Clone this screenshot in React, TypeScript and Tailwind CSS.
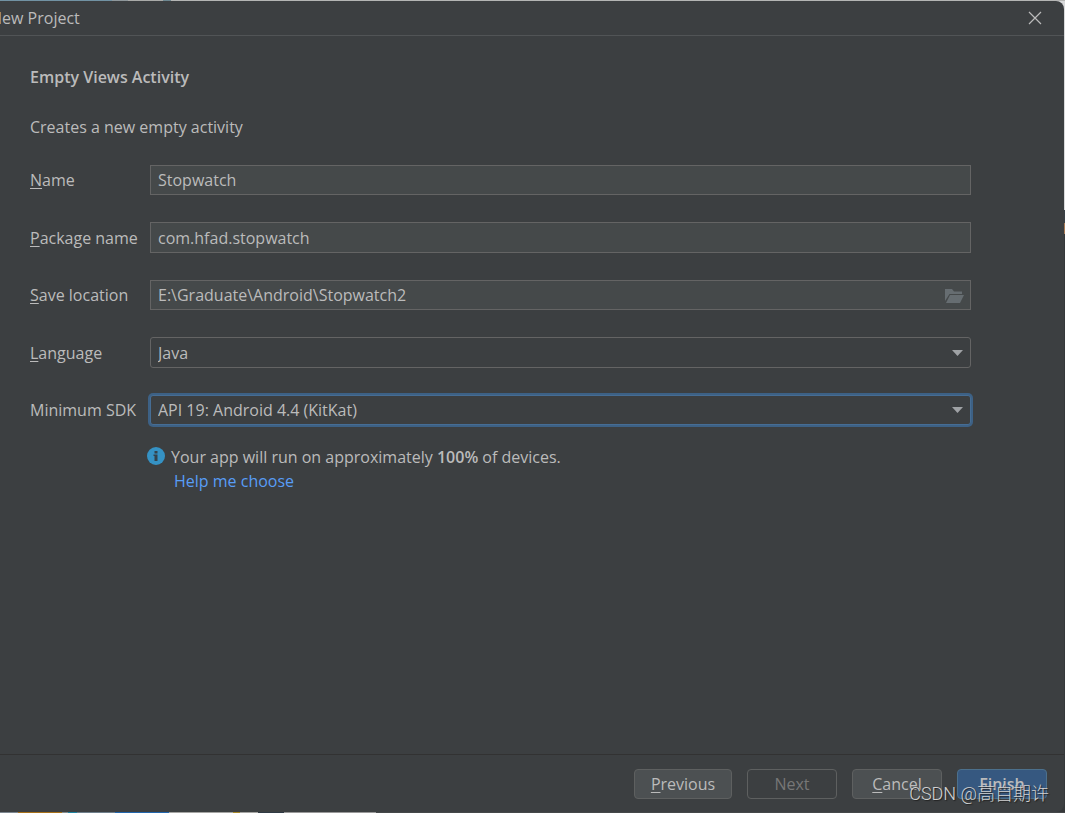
import type { ReactNode } from "react";

const fieldClass =
  "w-full border border-[#646464] bg-[#45494a] px-[7px] text-[#bbbbbb] outline-none";
const buttonClass = "h-[30px] rounded border text-center leading-[28px]";

const topStrip = [
  { width: 112, color: "bg-[#7192a3]" },
  { width: 16, color: "bg-[#8e979b]" },
  { width: 35, color: "bg-[#a9aaa8]" },
  { width: 8, color: "bg-[#6d8790]" },
];

const bottomStrip = [
  { width: 18, color: "bg-[#7d8790]" },
  { width: 44, color: "bg-[#a8711a]" },
  { width: 6, color: "bg-[#858b8e]" },
  { width: 9, color: "bg-[#1f83a0]" },
  { width: 38, color: "bg-[#6f7f8c]" },
  { width: 54, color: "bg-[#2266ad]" },
  { width: 64, color: "bg-[#a5a5a3]" },
  { width: 7, color: "bg-[#a8892a]" },
  { width: 18, color: "bg-[#a5a5a3]" },
  { width: 26, color: "bg-[#303a44]" },
  { width: 92, color: "bg-[#999999]" },
];

function Strip({ parts }: { parts: { width: number; color: string }[] }) {
  return (
    <>
      {parts.map((part, index) => (
        <span key={index} className={part.color} style={{ width: part.width }} />
      ))}
    </>
  );
}

function Mnemonic({ text }: { text: string }) {
  return (
    <>
      <span className="underline decoration-1 underline-offset-2">{text[0]}</span>
      {text.slice(1)}
    </>
  );
}

function Label({ htmlFor, children }: { htmlFor: string; children: ReactNode }) {
  return (
    <label htmlFor={htmlFor} className="w-[120px] shrink-0 whitespace-nowrap">
      {children}
    </label>
  );
}

function Arrow() {
  return (
    <svg
      className="pointer-events-none absolute right-[8px] top-1/2 -translate-y-1/2"
      width="11"
      height="6"
      viewBox="0 0 11 6"
    >
      <path d="M0 0h11L5.500 6z" fill="#9fa2a5" />
    </svg>
  );
}

export default function App() {
  return (
    <div className="flex min-h-screen flex-col overflow-hidden bg-[linear-gradient(#d9dadb_210px,#3a4146_210px,#3a4146_223px,#a87a55_223px,#a87a55_234px,#35383a_234px)] font-['Open_Sans','Noto_Sans_CJK_SC',sans-serif] text-[16px] leading-[22px] text-[#bbbbbb]">
      <div className="flex h-px bg-[#b4b5b4]">
        <Strip parts={topStrip} />
      </div>

      <div className="relative mr-px flex flex-1 flex-col rounded-r-lg bg-[#3c3f41]">
        <header className="flex h-[35px] items-center justify-between border-b border-[#515456] pr-[22px]">
          <h1 className="-ml-[10px] whitespace-nowrap">New Project</h1>
          <button type="button" aria-label="Close">
            <svg width="14" height="14" viewBox="0 0 14 14" fill="none" stroke="#bbbbbb" strokeWidth="1.200">
              <path d="M1 1l12 12M13 1L1 13" />
            </svg>
          </button>
        </header>

        <main className="flex-1 pl-[30px] pr-[93px] pt-[30px]">
          <h2 className="font-semibold">Empty Views Activity</h2>
          <p className="mt-7">Creates a new empty activity</p>

          <form className="mt-[27px] flex flex-col gap-[27px]">
            <div className="flex items-center">
              <Label htmlFor="name">
                <Mnemonic text="Name" />
              </Label>
              <input id="name" className={`${fieldClass} h-[30px]`} defaultValue="Stopwatch" />
            </div>
            <div className="flex items-center">
              <Label htmlFor="package">
                <Mnemonic text="Package name" />
              </Label>
              <input id="package" className={`${fieldClass} h-[31px]`} defaultValue="com.hfad.stopwatch" />
            </div>
            <div className="flex items-center">
              <Label htmlFor="location">
                <Mnemonic text="Save location" />
              </Label>
              <div className="relative flex-1">
                <input
                  id="location"
                  className={`${fieldClass} block h-[30px] pr-9`}
                  defaultValue="E:\Graduate\Android\Stopwatch2"
                />
                <button type="button" aria-label="Browse" className="absolute right-[7px] top-[9px]">
                  <svg width="19" height="14" viewBox="0 0 19 14" fill="#666d71">
                    <path d="M0 0h7l2 2.500h8V5H4.500L0 12z" />
                    <path d="M5 6h14l-4 8H1z" />
                  </svg>
                </button>
              </div>
            </div>
            <div className="flex items-center">
              <Label htmlFor="language">
                <Mnemonic text="Language" />
              </Label>
              <div className="relative flex-1">
                <select
                  id="language"
                  className="block h-[31px] w-full appearance-none rounded-[3px] border border-[#646464] bg-[#3c3f41] px-[7px] outline-none"
                >
                  <option>Java</option>
                </select>
                <Arrow />
              </div>
            </div>
            <div className="flex items-center">
              <Label htmlFor="sdk">Minimum SDK</Label>
              <div className="relative flex-1">
                <select
                  id="sdk"
                  className="block h-[30px] w-full appearance-none rounded-[3px] border border-[#466d94] bg-[#3c3f41] px-[7px] outline-none ring-2 ring-[#3d6185]"
                >
                  <option>API 19: Android 4.4 (KitKat)</option>
                </select>
                <Arrow />
              </div>
            </div>
          </form>

          <div className="ml-[117px] mt-5 flex gap-[6px]">
            <svg className="mt-[2px] shrink-0" width="18" height="18" viewBox="0 0 18 18">
              <circle cx="9" cy="9" r="9" fill="#3592c4" />
              <path d="M7.500 4h3v2.500h-3zM6.500 7.500h4V14h-3V9h-1z" fill="#35424b" />
            </svg>
            <div className="leading-6">
              <p>
                Your app will run on approximately <b className="font-semibold">100%</b> of devices.
              </p>
              <a href="#help" className="ml-[3px] block text-[#589df6]">
                Help me choose
              </a>
            </div>
          </div>
        </main>

        <footer className="flex justify-end gap-[15px] border-t border-[#323232] pb-[13px] pr-[17px] pt-[14px]">
          <button type="button" className={`${buttonClass} w-[98px] border-[#5e6060] bg-[#4c5052]`}>
            <Mnemonic text="Previous" />
          </button>
          <button type="button" disabled className={`${buttonClass} w-[90px] border-[#5e6060] text-[#777777]`}>
            Next
          </button>
          <button type="button" className={`${buttonClass} w-[90px] border-[#5e6060] bg-[#4c5052]`}>
            <Mnemonic text="Cancel" />
          </button>
          <button type="button" className={`${buttonClass} w-[90px] border-[#4c708c] bg-[#365880] font-semibold`}>
            Finish
          </button>
        </footer>

        <span className="pointer-events-none absolute bottom-[6px] right-[15px] whitespace-nowrap font-['Roboto','Noto_Sans_CJK_SC',sans-serif] text-[18px] font-light leading-6 text-[#d0d1d2] [text-shadow:1px_1px_1px_#222222]">
          CSDN @高自期许
        </span>
      </div>

      <div className="flex h-px bg-[#45484a]">
        <Strip parts={bottomStrip} />
      </div>
    </div>
  );
}
